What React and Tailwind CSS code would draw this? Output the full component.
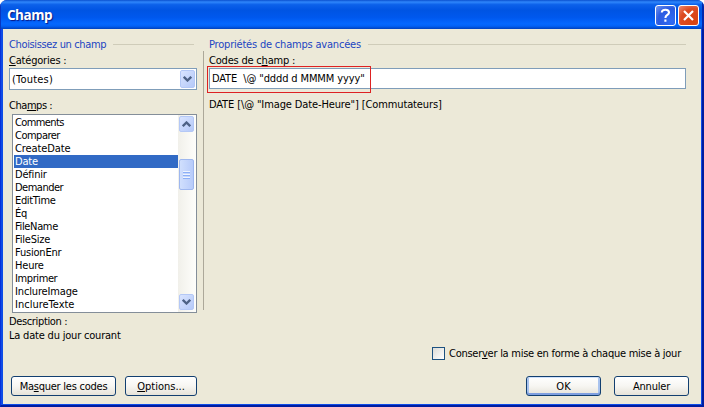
import React from "react";

const fields = [
  ["Comments", "tracking-[-0.6px]"],
  ["Comparer", "tracking-[-0.5px]"],
  ["CreateDate", "tracking-[-0.1px]"],
  ["Date", "tracking-[-0.2px]"],
  ["Définir", "tracking-[-0.2px]"],
  ["Demander", "tracking-[-0.5px]"],
  ["EditTime", "tracking-[-0.35px]"],
  ["Éq", "tracking-[-0.2px]"],
  ["FileName", "tracking-[-0.35px]"],
  ["FileSize", "tracking-[-0.2px]"],
  ["FusionEnr", "tracking-[-0.2px]"],
  ["Heure", "tracking-[-0.2px]"],
  ["Imprimer", "tracking-[-0.4px]"],
  ["InclureImage", "tracking-[-0.15px]"],
  ["InclureTexte", "tracking-[0px]"],
];

function Chevron({ up }) {
  return (
    <svg width="9" height="6" viewBox="0 0 9 6" className={up ? "rotate-180" : ""}>
      <path d="M.8 .8l3.7 3.7L8.2 .8" fill="none" stroke="#4d6185" strokeWidth="2.3" />
    </svg>
  );
}

function ScrollButton({ up, className }) {
  return (
    <div className={`flex shrink-0 items-center justify-center rounded-[2px] border border-[#b4c8f6] bg-gradient-to-br from-[#d9e4ff] to-[#b5c9f8] ${className}`}>
      <Chevron up={up} />
    </div>
  );
}

function Heading({ children, className = "" }) {
  return (
    <div className="flex h-[15px] items-center text-[#1c45c2]">
      <span className={className}>{children}</span>
      <div className="ml-[7px] h-px flex-1 bg-[#cfccb9]" />
    </div>
  );
}

function Button({ children, primary, className }) {
  return (
    <button
      className={`flex h-[20px] items-center justify-center rounded-[3px] border border-[#123f70] bg-gradient-to-b from-white via-[#f7f6f2] to-[#e6e3d9] ${primary ? "shadow-[inset_0_1px_0_#cee0fb,inset_0_-2px_0_#7f9fe0,inset_2px_0_0_#a9c3ee,inset_-2px_0_0_#a9c3ee]" : ""} ${className}`}
    >
      <span className="whitespace-pre">{children}</span>
    </button>
  );
}

export default function App() {
  return (
    <div className="flex h-[407px] w-[704px] flex-col overflow-hidden whitespace-pre rounded-t-[7px] bg-[#0a32c8] text-[11px] leading-[13px] text-black [font-family:'DejaVu_Sans_Condensed','DejaVu_Sans',sans-serif] [font-stretch:condensed]">
      <header className="flex h-[29px] shrink-0 items-center bg-[linear-gradient(180deg,#0a50cf_0%,#2f86fb_7%,#0c61ea_16%,#0054e3_35%,#0058ee_60%,#0468ff_82%,#0261f5_90%,#0041bd_100%)] pr-[5px] pl-[7px] pt-[2px] shadow-[inset_1px_0_0_#0836c0,inset_-2px_0_0_#0428ac]">
        <h1 className="flex-1 text-[13.5px] font-bold tracking-[-0.5px] text-white [font-family:'Open_Sans',sans-serif] [font-stretch:normal] [text-shadow:1px_1px_1px_#0a1883]">Champ</h1>
        <div className="mr-[2px] flex size-[21px] items-center justify-center rounded-[3px] border border-white bg-[radial-gradient(circle_at_80%_80%,#2f6bf4,#2b5be0_60%,#7698f0)]">
          <svg width="13" height="15" viewBox="0 0 13 15" fill="none" stroke="white" strokeWidth="2.1">
            <path d="M2.8 4.5C2.8 .8 10 .8 10 4.6C10 7 6.4 7 6.4 10" />
            <path d="M6.4 11.5v2.3" />
          </svg>
        </div>
        <div className="flex size-[21px] items-center justify-center rounded-[3px] border border-white bg-[radial-gradient(circle_at_75%_80%,#d94411,#dc4b22_60%,#ee8c73)]">
          <svg width="13" height="13" viewBox="0 0 13 13" stroke="white" strokeWidth="2.2">
            <path d="M2 2l9 9M11 2l-9 9" />
          </svg>
        </div>
      </header>

      <div className="flex min-h-0 flex-1 border-r-2 border-b-2 border-l border-r-[#001da0] border-b-[#001da0] border-l-[#0831d9] bg-[#0f4ce6] pr-px pb-px pl-[2px]">
        <main className="flex min-w-0 flex-1 flex-col bg-[#ece9d8] pt-[8px]">
          <div className="flex h-[305px]">
            <section className="flex w-[191px] flex-col pl-[6px]">
              <Heading className="tracking-[-0.36px]">Choisissez un champ</Heading>
              <label className="mt-[2px] h-[14px] tracking-[-0.2px]"><u>C</u>atégories :</label>
              <div className="flex h-[22px] w-[188px] items-center border border-[#7f9db9] bg-white pr-px pl-[2px]">
                <span className="flex-1 tracking-[0.2px]">(Toutes)</span>
                <ScrollButton className="h-[18px] w-[15px]" />
              </div>
              <label className="mt-[9px] h-[15px] tracking-[-0.45px]">Cha<u>m</u>ps :</label>
              <div className="ml-[3px] flex h-[199px] w-[185px] border border-[#848e99] bg-white">
                <ul className="flex-1 pt-px pl-px">
                  {fields.map(([name, tracking]) => (
                    <li key={name} className={`h-[13px] pl-px leading-[14px] ${tracking} ${name === "Date" ? "bg-[#316ac5] text-white" : ""}`}>
                      {name}
                    </li>
                  ))}
                </ul>
                <div className="flex w-[18px] flex-col bg-gradient-to-r from-[#f1f0ea] to-[#fefefb] px-px pt-px pb-[2px]">
                  <ScrollButton up className="h-[16px] w-[15px]" />
                  <div className="mt-[27px] flex h-[31px] w-[15px] flex-col items-center justify-center gap-px rounded-[2px] border border-[#9eb7ef] bg-gradient-to-r from-[#d0dffd] to-[#b7cbfa]">
                    <i className="h-px w-[7px] bg-[#eef4fe] shadow-[0_1px_0_#8cb0f8]" />
                    <i className="mt-px h-px w-[7px] bg-[#eef4fe] shadow-[0_1px_0_#8cb0f8]" />
                    <i className="mt-px h-px w-[7px] bg-[#eef4fe] shadow-[0_1px_0_#8cb0f8]" />
                  </div>
                  <div className="flex-1" />
                  <ScrollButton className="h-[16px] w-[15px]" />
                </div>
              </div>
              <p className="mt-[2px] h-[14px] tracking-[-0.36px]">Description :</p>
              <p className="tracking-[-0.2px]">La date du jour courant</p>
            </section>

            <div className="mt-[14px] ml-[9px] h-[259px] w-px bg-[#aca899]" />

            <section className="ml-[5px] flex w-[477px] flex-col">
              <Heading className="tracking-[-0.2px]">Propriétés de champs avancées</Heading>
              <label className="mt-[2px] h-[14px] tracking-[-0.2px]">Codes de c<u>h</u>amp :</label>
              <div className="relative flex h-[21px] items-center border border-[#7f9db9] bg-white pl-[2px]">
                <span className="tracking-[-0.12px]">{'DATE  \\@ "dddd d MMMM yyyy"'}</span>
                <div className="absolute -top-[3px] -left-[3px] h-[27px] w-[164px] border border-[#dd2222]" />
              </div>
              <p className="mt-[9px] tracking-[-0.12px]">{'DATE [\\@ "Image Date-Heure"] [Commutateurs]'}</p>
            </section>
          </div>

          <label className="mt-[5px] ml-[429px] flex h-[13px] items-center">
            <span className="mr-[4px] size-[13px] border border-[#1c5180] bg-gradient-to-br from-[#dcdcd7] to-white" />
            <span className="tracking-[-0.26px]">Conser<u>v</u>er la mise en forme à chaque mise à jour</span>
          </label>

          <footer className="mt-[16px] flex pr-[12px] pl-[8px]">
            <Button className="w-[105px] tracking-[-0.24px]">Ma<u>s</u>quer les codes</Button>
            <Button className="ml-[9px] w-[72px]"><u>O</u>ptions...</Button>
            <div className="flex-1" />
            <Button primary className="w-[75px]">OK</Button>
            <Button className="ml-[13px] w-[75px] tracking-[-0.2px]">Annuler</Button>
          </footer>
        </main>
      </div>
    </div>
  );
}
